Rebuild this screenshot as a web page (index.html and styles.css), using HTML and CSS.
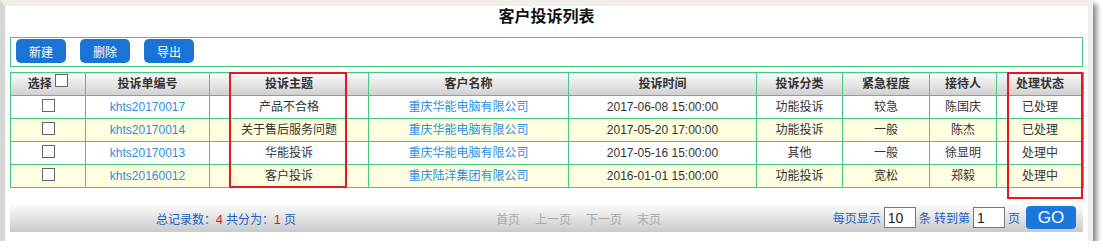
FILE: index.html
```html
<!DOCTYPE html>
<html lang="zh-CN">
<head>
    <meta charset="UTF-8">
    <title>客户投诉列表</title>
    <link rel="stylesheet" href="styles.css">
</head>
<body>
    <div class="frame">
        <h1 class="title">客户投诉列表</h1>

        <div class="toolbar">
            <button type="button" class="btn">新建</button>
            <button type="button" class="btn">删除</button>
            <button type="button" class="btn">导出</button>
        </div>

        <table class="grid">
            <colgroup>
                <col style="width:75px"><col style="width:124px"><col style="width:159px">
                <col style="width:200px"><col style="width:188px"><col style="width:86px">
                <col style="width:87px"><col style="width:67px"><col style="width:87px">
            </colgroup>
            <thead>
                <tr>
                    <th>选择 <input type="checkbox" class="chk"></th>
                    <th>投诉单编号</th>
                    <th>投诉主题</th>
                    <th>客户名称</th>
                    <th>投诉时间</th>
                    <th>投诉分类</th>
                    <th>紧急程度</th>
                    <th>接待人</th>
                    <th>处理状态</th>
                </tr>
            </thead>
            <tbody>
                <tr>
                    <td><input type="checkbox" class="chk"></td>
                    <td><a href="#">khts20170017</a></td>
                    <td>产品不合格</td>
                    <td><a href="#">重庆华能电脑有限公司</a></td>
                    <td>2017-06-08 15:00:00</td>
                    <td>功能投诉</td>
                    <td>较急</td>
                    <td>陈国庆</td>
                    <td>已处理</td>
                </tr>
                <tr>
                    <td><input type="checkbox" class="chk"></td>
                    <td><a href="#">khts20170014</a></td>
                    <td>关于售后服务问题</td>
                    <td><a href="#">重庆华能电脑有限公司</a></td>
                    <td>2017-05-20 17:00:00</td>
                    <td>功能投诉</td>
                    <td>一般</td>
                    <td>陈杰</td>
                    <td>已处理</td>
                </tr>
                <tr>
                    <td><input type="checkbox" class="chk"></td>
                    <td><a href="#">khts20170013</a></td>
                    <td>华能投诉</td>
                    <td><a href="#">重庆华能电脑有限公司</a></td>
                    <td>2017-05-16 15:00:00</td>
                    <td>其他</td>
                    <td>一般</td>
                    <td>徐显明</td>
                    <td>处理中</td>
                </tr>
                <tr>
                    <td><input type="checkbox" class="chk"></td>
                    <td><a href="#">khts20160012</a></td>
                    <td>客户投诉</td>
                    <td><a href="#">重庆陆洋集团有限公司</a></td>
                    <td>2016-01-01 15:00:00</td>
                    <td>功能投诉</td>
                    <td>宽松</td>
                    <td>郑毅</td>
                    <td>处理中</td>
                </tr>
            </tbody>
        </table>

        <div class="pager">
            <div class="summary">总记录数：<span class="num">4</span> 共分为：<span class="num">1</span> 页</div>
            <div class="pages">
                <span>首页</span><span>上一页</span><span>下一页</span><span>末页</span>
            </div>
            <div class="jump">
                每页显示 <input type="text" class="box" value="10"> 条 转到第 <input type="text" class="box" value="1"> 页
                <button type="button" class="go">GO</button>
            </div>
        </div>

        <div class="mark mark-subject"></div>
        <div class="mark mark-status"></div>
    </div>
</body>
</html>
```

FILE: styles.css
```css
body { margin: 0; background: #fff; font-family: "Liberation Sans", "Noto Sans CJK SC", sans-serif; font-size: 12px; color: #333; }

.frame { position: relative; box-sizing: border-box; width: 1093px; height: 241px; padding: 0 5px; background: #fff;
    border-left: 5px solid #d6d6d6; border-top: 6px solid #f2eeea; border-right: 5px solid #efefef;
    box-shadow: 4px 4px 5px rgba(0, 0, 0, 0.45); }

.title { margin: 0; height: 31px; line-height: 22px; font-size: 16px; font-weight: bold; color: #111; text-align: center; }

.toolbar { display: flex; gap: 14px; height: 24px; padding: 1px 5px 3px; border: 1px solid #44c882; }
.btn { width: 50px; height: 24px; padding: 0; border: none; border-radius: 5px; background: #1a74d6; color: #fff;
    font-family: inherit; font-size: 12px; cursor: pointer; }

.grid { width: 1073px; margin-top: 5px; border-collapse: collapse; table-layout: fixed; }
.grid th, .grid td { height: 22px; padding: 0; border: 1px solid #44c882; text-align: center; line-height: 20px; }
.grid th { background: linear-gradient(#fafafa, #cfcfcf); font-weight: bold; color: #333; }
.grid tbody tr:nth-child(even) td { background: #fffde0; }
.grid a { color: #2e8ddf; text-decoration: none; }

.chk { appearance: none; -webkit-appearance: none; width: 13px; height: 13px; margin: 0; vertical-align: -1px;
    border: 1px solid #666; background: #fff; }
th .chk { vertical-align: 1px; }

.pager { display: flex; align-items: center; height: 29px; margin-top: 15px; background: linear-gradient(#fff, #c9c9c9); color: #1e60c4; }
.summary { box-sizing: border-box; width: 486px; padding-left: 146px; padding-top: 1px; }
.num { color: #e01010; }
.pages { display: flex; gap: 15px; padding-top: 1px; color: #aaa; }
.jump { display: flex; align-items: center; gap: 3px; margin-left: auto; padding-right: 7px; }
.box { box-sizing: border-box; width: 32px; height: 21px; padding: 0 3px; border: 1px solid #777; font-family: inherit; font-size: 14px; color: #222; }
.go { width: 50px; height: 23px; margin-left: 3px; padding: 0; border: none; border-radius: 4px; background: #1a78dc; color: #fff;
    font-family: inherit; font-size: 17px; cursor: pointer; }

.mark { position: absolute; border: 2px solid #e3191f; pointer-events: none; }
.mark-subject { left: 224px; top: 66px; width: 114px; height: 112px; }
.mark-status { left: 1002px; top: 66px; width: 72px; height: 123px; }
```
